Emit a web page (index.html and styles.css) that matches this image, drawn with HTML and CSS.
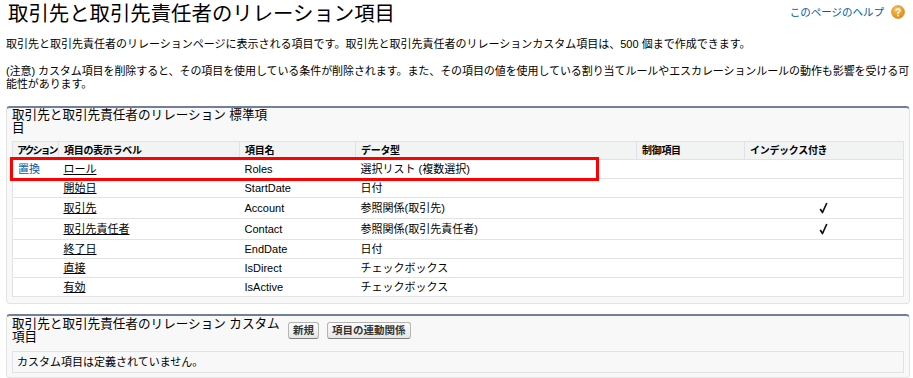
FILE: index.html
```html
<!DOCTYPE html>
<html lang="ja">
<head>
<meta charset="utf-8">
<title>取引先と取引先責任者のリレーション項目</title>
<link rel="stylesheet" href="styles.css">
</head>
<body>
<div class="page">
  <div class="ptHeader">
    <h1 class="pageTitle">取引先と取引先責任者のリレーション項目</h1>
    <a class="help" href="#">このページのヘルプ
      <svg class="helpIcon" width="14" height="14" viewBox="0 0 14 14">
        <defs>
          <radialGradient id="hg" cx="40%" cy="30%" r="70%">
            <stop offset="0" stop-color="#fcc35a"/>
            <stop offset="1" stop-color="#e08a12"/>
          </radialGradient>
        </defs>
        <circle cx="7" cy="7" r="6.5" fill="url(#hg)" stroke="#d9880f" stroke-width="0.6"/>
        <path d="M5 5.3 C5 3.6 9 3.6 9 5.4 C9 6.8 7 6.9 7 8.4" fill="none" stroke="#fff" stroke-width="1.6" stroke-linecap="round"/>
        <circle cx="7" cy="10.6" r="0.95" fill="#fff"/>
      </svg>
    </a>
  </div>

  <p class="intro first">取引先と取引先責任者のリレーションページに表示される項目です。取引先と取引先責任者のリレーションカスタム項目は、500 個まで作成できます。</p>
  <p class="intro second"><span class="line">(注意) カスタム項目を削除すると、その項目を使用している条件が削除されます。また、その項目の値を使用している割り当てルールやエスカレーションルールの動作も影響を受ける可</span><br>能性があります。</p>

  <div class="pbox">
    <div class="pbHeader">
      <h3 class="pbTitle"><span class="line">取引先と取引先責任者のリレーション 標準項</span><br>目</h3>
    </div>
    <table class="list">
      <colgroup>
        <col class="c1"><col class="c2"><col class="c3"><col class="c4"><col class="c5"><col class="c6">
      </colgroup>
      <thead>
        <tr>
          <th class="colAction">アクション</th>
          <th>項目の表示ラベル</th>
          <th>項目名</th>
          <th>データ型</th>
          <th>制御項目</th>
          <th>インデックス付き</th>
        </tr>
      </thead>
      <tbody>
        <tr>
          <td><a class="act" href="#">置換</a></td>
          <td><a class="lbl" href="#">ロール</a></td>
          <td>Roles</td>
          <td>選択リスト (複数選択)</td>
          <td></td>
          <td></td>
        </tr>
        <tr>
          <td></td>
          <td><a class="lbl" href="#">開始日</a></td>
          <td>StartDate</td>
          <td>日付</td>
          <td></td>
          <td></td>
        </tr>
        <tr>
          <td></td>
          <td><a class="lbl" href="#">取引先</a></td>
          <td>Account</td>
          <td>参照関係(取引先)</td>
          <td></td>
          <td class="chk"><svg width="9" height="14" viewBox="0 0 9 14"><path d="M1.2 8 L3.5 11.5 L7.8 2" fill="none" stroke="#111" stroke-width="1.7" stroke-linejoin="round"/></svg></td>
        </tr>
        <tr>
          <td></td>
          <td><a class="lbl" href="#">取引先責任者</a></td>
          <td>Contact</td>
          <td>参照関係(取引先責任者)</td>
          <td></td>
          <td class="chk"><svg width="9" height="14" viewBox="0 0 9 14"><path d="M1.2 8 L3.5 11.5 L7.8 2" fill="none" stroke="#111" stroke-width="1.7" stroke-linejoin="round"/></svg></td>
        </tr>
        <tr>
          <td></td>
          <td><a class="lbl" href="#">終了日</a></td>
          <td>EndDate</td>
          <td>日付</td>
          <td></td>
          <td></td>
        </tr>
        <tr>
          <td></td>
          <td><a class="lbl" href="#">直接</a></td>
          <td>IsDirect</td>
          <td>チェックボックス</td>
          <td></td>
          <td></td>
        </tr>
        <tr>
          <td></td>
          <td><a class="lbl" href="#">有効</a></td>
          <td>IsActive</td>
          <td>チェックボックス</td>
          <td></td>
          <td></td>
        </tr>
      </tbody>
    </table>
  </div>

  <div class="pbox second">
    <div class="pbHeader">
      <h3 class="pbTitle"><span class="line">取引先と取引先責任者のリレーション カスタム</span><br>項目</h3>
      <div class="pbButtons">
        <button class="btn">新規</button>
        <button class="btn">項目の連動関係</button>
      </div>
    </div>
    <div class="empty">カスタム項目は定義されていません。</div>
  </div>
</div>
<div class="highlight"></div>
</body>
</html>
```

FILE: styles.css
```css
html, body {
  margin: 0;
  padding: 0;
  background: #fff;
}
body {
  font-family: "Liberation Sans", "Noto Sans CJK JP", sans-serif;
  font-size: 11px;
  color: #000;
  position: relative;
}
.page {
  padding: 0 3px 0 6px;
}
.line {
  white-space: nowrap;
}
.ptHeader {
  display: flex;
  justify-content: space-between;
  align-items: flex-start;
  height: 31px;
}
.pageTitle {
  margin: 0;
  padding: 0 0 0 2px;
  font-size: 20.4px;
  font-weight: normal;
  line-height: 28px;
  color: #000;
}
.help {
  display: flex;
  align-items: center;
  gap: 7px;
  margin-top: 5px;
  margin-right: 5px;
  color: #015ba7;
  font-size: 10.5px;
  text-decoration: none;
  line-height: 14px;
}
.helpIcon {
  display: block;
}
.intro {
  margin: 0;
  line-height: 13px;
}
.intro.first {
  margin-top: 7px;
}
.intro.second {
  margin-top: 14px;
  letter-spacing: -0.08px;
}
.pbox {
  margin-top: 15px;
  background: #f8f8f8;
  border: 1px solid #e4e4e4;
  border-top: 2px solid #747e96;
  border-radius: 4px;
  padding: 0 5px 6px;
}
.pbox.second {
  margin-top: 10px;
  padding-bottom: 4px;
}
.pbHeader {
  display: flex;
  align-items: flex-start;
  padding-top: 1px;
  padding-bottom: 6px;
}
.pbox.second .pbHeader {
  padding-top: 2px;
  padding-bottom: 7px;
}
.pbTitle {
  margin: 0;
  width: 276px;
  font-size: 12.6px;
  font-weight: normal;
  line-height: 13px;
  color: #000;
}
.pbButtons {
  display: flex;
  gap: 8px;
  margin-left: 0;
  margin-top: 4px;
}
.btn {
  font-family: "Liberation Sans", "Noto Sans CJK JP", sans-serif;
  font-size: 10.5px;
  font-weight: bold;
  color: #333;
  background: linear-gradient(#fdfdfd, #e6e6e6);
  border: 1px solid #b5b5b5;
  border-bottom-color: #7f7f7f;
  border-radius: 3px;
  padding: 1px 4px;
  line-height: 13px;
  margin: 0;
}
.list {
  width: 100%;
  border-collapse: collapse;
  table-layout: fixed;
  background: #fff;
  border: 1px solid #e0e3e5;
}
.c1 { width: 46px; }
.c2 { width: 181px; }
.c3 { width: 116px; }
.c4 { width: 281px; }
.c5 { width: 108px; }
.c6 { width: auto; }
.list th {
  background: #f2f3f3;
  text-align: left;
  font-size: 10px;
  font-weight: bold;
  line-height: 12px;
  padding: 3px 2px 2px 5px;
  border-right: 1px solid #e0e3e5;
  border-bottom: 1px solid #e0e3e5;
  white-space: nowrap;
  overflow: hidden;
  letter-spacing: -0.3px;
}
.list th.colAction {
  letter-spacing: -2px;
  padding-left: 4px;
}
.list td {
  font-size: 11px;
  line-height: 12px;
  padding: 3px 2px 3px 5px;
  border-bottom: 1px solid #e3e3e3;
  white-space: nowrap;
  vertical-align: middle;
}
.list td.chk {
  text-align: center;
  padding: 3px 0;
}
.list td.chk svg {
  display: inline-block;
  vertical-align: middle;
}
.act {
  color: #015ba7;
  text-decoration: none;
}
.lbl {
  color: #000;
  text-decoration: underline;
}
.empty {
  background: #f8f8f8;
  border: 1px solid #e0e3e5;
  padding: 4px 4px 3px;
  line-height: 13px;
}
.highlight {
  position: absolute;
  left: 10px;
  top: 157px;
  width: 589px;
  height: 24px;
  border: 3px solid #f00;
  box-sizing: border-box;
  pointer-events: none;
}
```
